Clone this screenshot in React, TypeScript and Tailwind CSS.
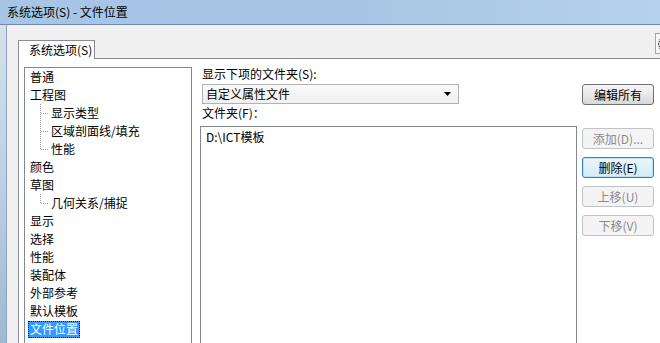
import React from "react";

const tree: { label: string; child?: boolean; last?: boolean; selected?: boolean }[] = [
  { label: "普通" },
  { label: "工程图" },
  { label: "显示类型", child: true },
  { label: "区域剖面线/填充", child: true },
  { label: "性能", child: true, last: true },
  { label: "颜色" },
  { label: "草图" },
  { label: "几何关系/捕捉", child: true, last: true },
  { label: "显示" },
  { label: "选择" },
  { label: "性能" },
  { label: "装配体" },
  { label: "外部参考" },
  { label: "默认模板" },
  { label: "文件位置", selected: true },
  { label: "FeatureManager" },
];

function TreeLine({ last }: { last?: boolean }) {
  return (
    <svg width="24" height="18" className="shrink-0" shapeRendering="crispEdges">
      <line x1="15.5" y1="0" x2="15.5" y2={last ? 9 : 18} stroke="#a0a0a0" strokeDasharray="1 1" />
      <line x1="16" y1="9.5" x2="23" y2="9.5" stroke="#a0a0a0" strokeDasharray="1 1" />
    </svg>
  );
}

function Btn({ children, disabled, focused }: { children: React.ReactNode; disabled?: boolean; focused?: boolean }) {
  const base = "h-[21px] w-[72px] rounded-[3px] border flex items-center justify-center text-[12px] leading-none";
  if (disabled)
    return <div className={`${base} border-[#bfc3c6] bg-[#f4f4f4] text-[#8a8a8a]`}>{children}</div>;
  if (focused)
    return (
      <div className={`${base} border-[#3c7fb1] bg-gradient-to-b from-[#eaf6fd] to-[#d3ebf9] text-black shadow-[inset_0_0_0_1px_#b8e2f8]`}>
        {children}
      </div>
    );
  return (
    <div className={`${base} border-[#707070] bg-gradient-to-b from-[#f6f6f6] via-[#e9e9e9] to-[#d8d8d8] text-black`}>
      {children}
    </div>
  );
}

export default function App() {
  return (
    <div className="w-[660px] h-[343px] overflow-hidden bg-[#f0f0f0] flex flex-col font-['Noto_Sans_CJK_SC','Noto_Sans',sans-serif] text-[12px] text-black">
      {/* title bar */}
      <div className="h-[25px] shrink-0 bg-gradient-to-r from-[#a7c5e6] via-[#a6c4e4] to-[#b6d1ee] border-b border-[#6f8aa8] flex items-center pl-[7px] text-[12px] leading-none">
        系统选项(S) - 文件位置
      </div>
      <div className="flex flex-1 min-h-0">
        {/* window frame */}
        <div className="w-[7px] shrink-0 bg-gradient-to-b from-[#d4e1ee] via-[#bccfe4] to-[#9fb8d4] border-r border-[#8ea2b9]" />
        <div className="flex-1 min-w-0 flex flex-col pl-[11px]">
          {/* tab row */}
          <div className="h-[33px] shrink-0 flex items-end">
            <div className="relative z-10 -mb-px h-[19px] w-[77px] shrink-0 bg-white border border-b-0 border-[#898c95] flex items-center pl-[10px] leading-none">
              系统选项(S)
            </div>
            <div className="self-start mt-[8px] ml-[560px] h-[21px] w-[20px] shrink-0 border border-[#a5a5a5] bg-[#f7f7f7] flex items-center pl-[1px]">
              <svg width="6" height="14" viewBox="0 0 6 14">
                <path d="M5 1 C2 1 3 6 1 7 C3 8 2 13 5 13" fill="none" stroke="#333" strokeWidth="1.2" strokeDasharray="1.2 0.8" />
              </svg>
            </div>
          </div>
          {/* panel */}
          <div className="flex-1 min-h-0 bg-white border-l border-t border-[#898c95] flex pl-[5px]">
            {/* tree */}
            <div className="mt-[8px] w-[168px] shrink-0 border border-b-0 border-[#828790] flex flex-col">
              {tree.map((t, i) => (
                <div key={i} className="h-[18px] shrink-0 flex items-center">
                  {t.child ? <TreeLine last={t.last} /> : <div className="w-[3px] shrink-0" />}
                  <span
                    className={
                      t.selected
                        ? "h-[17px] px-[2px] bg-[#3399ff] text-white outline outline-1 outline-dotted outline-[#1a1a1a] -outline-offset-1 flex items-center leading-none"
                        : "px-[2px] leading-none whitespace-nowrap"
                    }
                  >
                    {t.label}
                  </span>
                </div>
              ))}
            </div>
            {/* right area */}
            <div className="ml-[8px] pt-[7px] grid grid-cols-[377px_72px] gap-x-[5px] content-start">
              <div className="col-span-2 h-[16px] leading-[16px] pl-[2px]">显示下项的文件夹(S):</div>
              <div className="mt-[2px] h-[21px]">
                <div className="ml-[2px] w-[257px] h-[20px] border border-[#b2b2b2] bg-gradient-to-b from-[#fafafa] to-[#f0f0f0] flex items-center justify-between pl-[3px] pr-[7px] leading-none">
                  <span>自定义属性文件</span>
                  <svg width="7" height="4" viewBox="0 0 7 4">
                    <path d="M0 0 H7 L3.5 4 Z" fill="#000" />
                  </svg>
                </div>
              </div>
              <div className="mt-[2px]">
                <Btn>编辑所有</Btn>
              </div>
              <div className="col-span-2 h-[16px] leading-[16px] pl-[2px]">文件夹(F)：</div>
              <div className="mt-[5px] h-[260px] border border-b-0 border-[#828790] pl-[5px] pt-[1px]">
                <div className="h-[18px] leading-[18px]">D:\ICT模板</div>
              </div>
              <div className="mt-[7px] flex flex-col gap-[8px]">
                <Btn disabled>添加(D)...</Btn>
                <Btn focused>删除(E)</Btn>
                <Btn disabled>上移(U)</Btn>
                <Btn disabled>下移(V)</Btn>
              </div>
            </div>
          </div>
        </div>
      </div>
    </div>
  );
}
